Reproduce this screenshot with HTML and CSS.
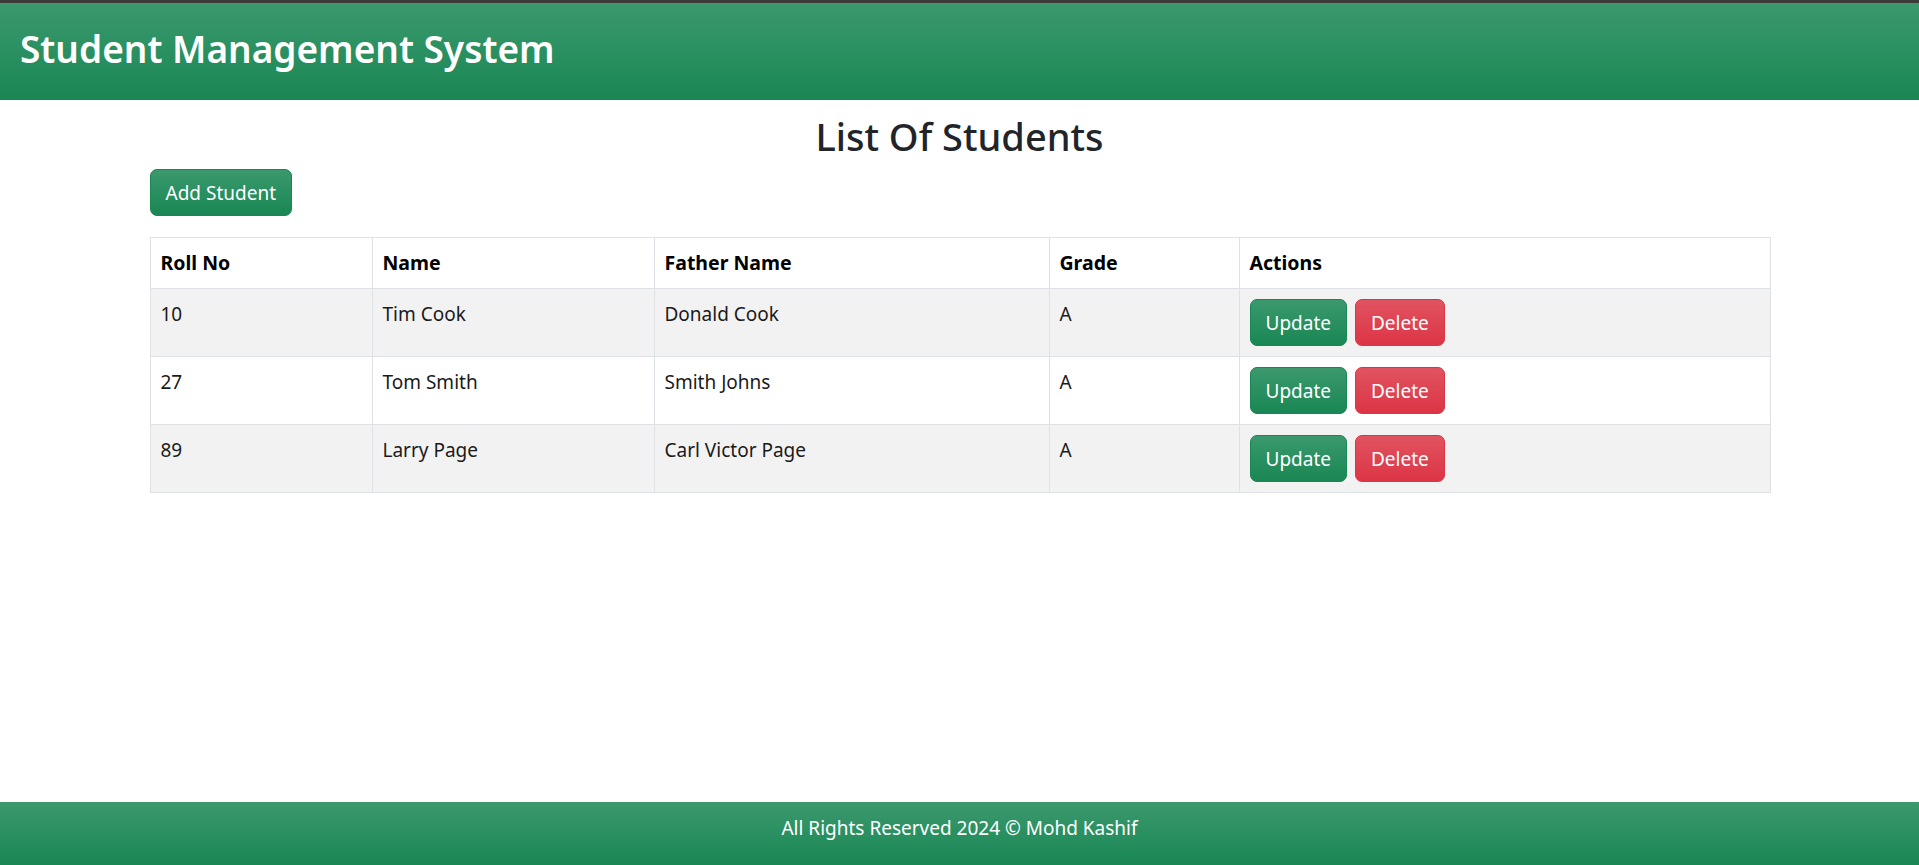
FILE: index.html
```html
<!DOCTYPE html>
<html lang="en">
<head>
<meta charset="utf-8">
<title>Student Management System</title>
<link rel="stylesheet" href="styles.css">
</head>
<body>
<div class="page">
  <header class="navbar">
    <span class="brand">Student Management System</span>
  </header>
  <main class="container">
    <h1 class="page-title">List Of Students</h1>
    <div class="toolbar">
      <button class="btn btn-success">Add Student</button>
    </div>
    <table class="students">
      <colgroup>
        <col class="col-roll">
        <col class="col-name">
        <col class="col-father">
        <col class="col-grade">
        <col class="col-actions">
      </colgroup>
      <thead>
        <tr>
          <th>Roll No</th>
          <th>Name</th>
          <th>Father Name</th>
          <th>Grade</th>
          <th>Actions</th>
        </tr>
      </thead>
      <tbody>
        <tr>
          <td>10</td>
          <td>Tim Cook</td>
          <td>Donald Cook</td>
          <td>A</td>
          <td><div class="actions"><button class="btn btn-success">Update</button><button class="btn btn-danger">Delete</button></div></td>
        </tr>
        <tr>
          <td>27</td>
          <td>Tom Smith</td>
          <td>Smith Johns</td>
          <td>A</td>
          <td><div class="actions"><button class="btn btn-success">Update</button><button class="btn btn-danger">Delete</button></div></td>
        </tr>
        <tr>
          <td>89</td>
          <td>Larry Page</td>
          <td>Carl Victor Page</td>
          <td>A</td>
          <td><div class="actions"><button class="btn btn-success">Update</button><button class="btn btn-danger">Delete</button></div></td>
        </tr>
      </tbody>
    </table>
  </main>
  <footer class="footer">All Rights Reserved 2024 © Mohd Kashif</footer>
</div>
</body>
</html>
```
FILE: styles.css
```css
* { box-sizing: border-box; }
html, body { margin: 0; padding: 0; }
body {
  font-family: "Segoe UI", "Noto Sans", "Open Sans", sans-serif;
  font-size: 19px;
  line-height: 30px;
  color: #212529;
  background: #fff;
}
.page {
  height: 865px;
  display: flex;
  flex-direction: column;
  overflow: hidden;
}
.navbar {
  flex: none;
  height: 100px;
  border-top: 3px solid #3b3b3b;
  background-color: #198754;
  background-image: linear-gradient(180deg, rgba(255,255,255,.15), rgba(255,255,255,0));
  display: flex;
  align-items: center;
  padding-left: 20px;
  padding-bottom: 6px;
}
.brand {
  color: #fff;
  font-size: 37px;
  font-weight: 600;
  line-height: 50px;
}
.container {
  flex: 1;
  width: 1620px;
  margin: 0 auto;
}
.page-title {
  margin: 0;
  padding-top: 6px;
  font-size: 38px;
  font-weight: 500;
  line-height: 60px;
  text-align: center;
  color: #212529;
}
.toolbar {
  display: flex;
  margin-top: 3px;
  margin-bottom: 21px;
}
.btn {
  font-family: inherit;
  font-size: 19px;
  line-height: 30px;
  padding: 8px 15px 7px;
  border: 1px solid transparent;
  border-radius: 7px;
  color: #fff;
  cursor: pointer;
  background-image: linear-gradient(180deg, rgba(255,255,255,.15), rgba(255,255,255,0));
}
.btn-success { background-color: #198754; border-color: #198754; }
.btn-danger { background-color: #dc3545; border-color: #dc3545; }
.students {
  width: 1620px;
  table-layout: fixed;
  border-collapse: collapse;
}
.col-roll { width: 222px; }
.col-name { width: 282px; }
.col-father { width: 395px; }
.col-grade { width: 190px; }
.col-actions { width: 531px; }
.students th, .students td {
  border: 1px solid #dee2e6;
  padding: 10px 10px;
  text-align: left;
  vertical-align: top;
}
.students th {
  font-size: 19.5px;
  font-weight: 700;
  color: #000;
}
.students tbody tr:nth-child(odd) td { background: #f2f2f2; }
.students td { height: 68px; color: #1a1a1a; }
.actions { display: flex; gap: 8px; }
.footer {
  flex: none;
  height: 63px;
  padding-top: 11px;
  text-align: center;
  color: #fff;
  background-color: #198754;
  background-image: linear-gradient(180deg, rgba(255,255,255,.15), rgba(255,255,255,0));
}
```
